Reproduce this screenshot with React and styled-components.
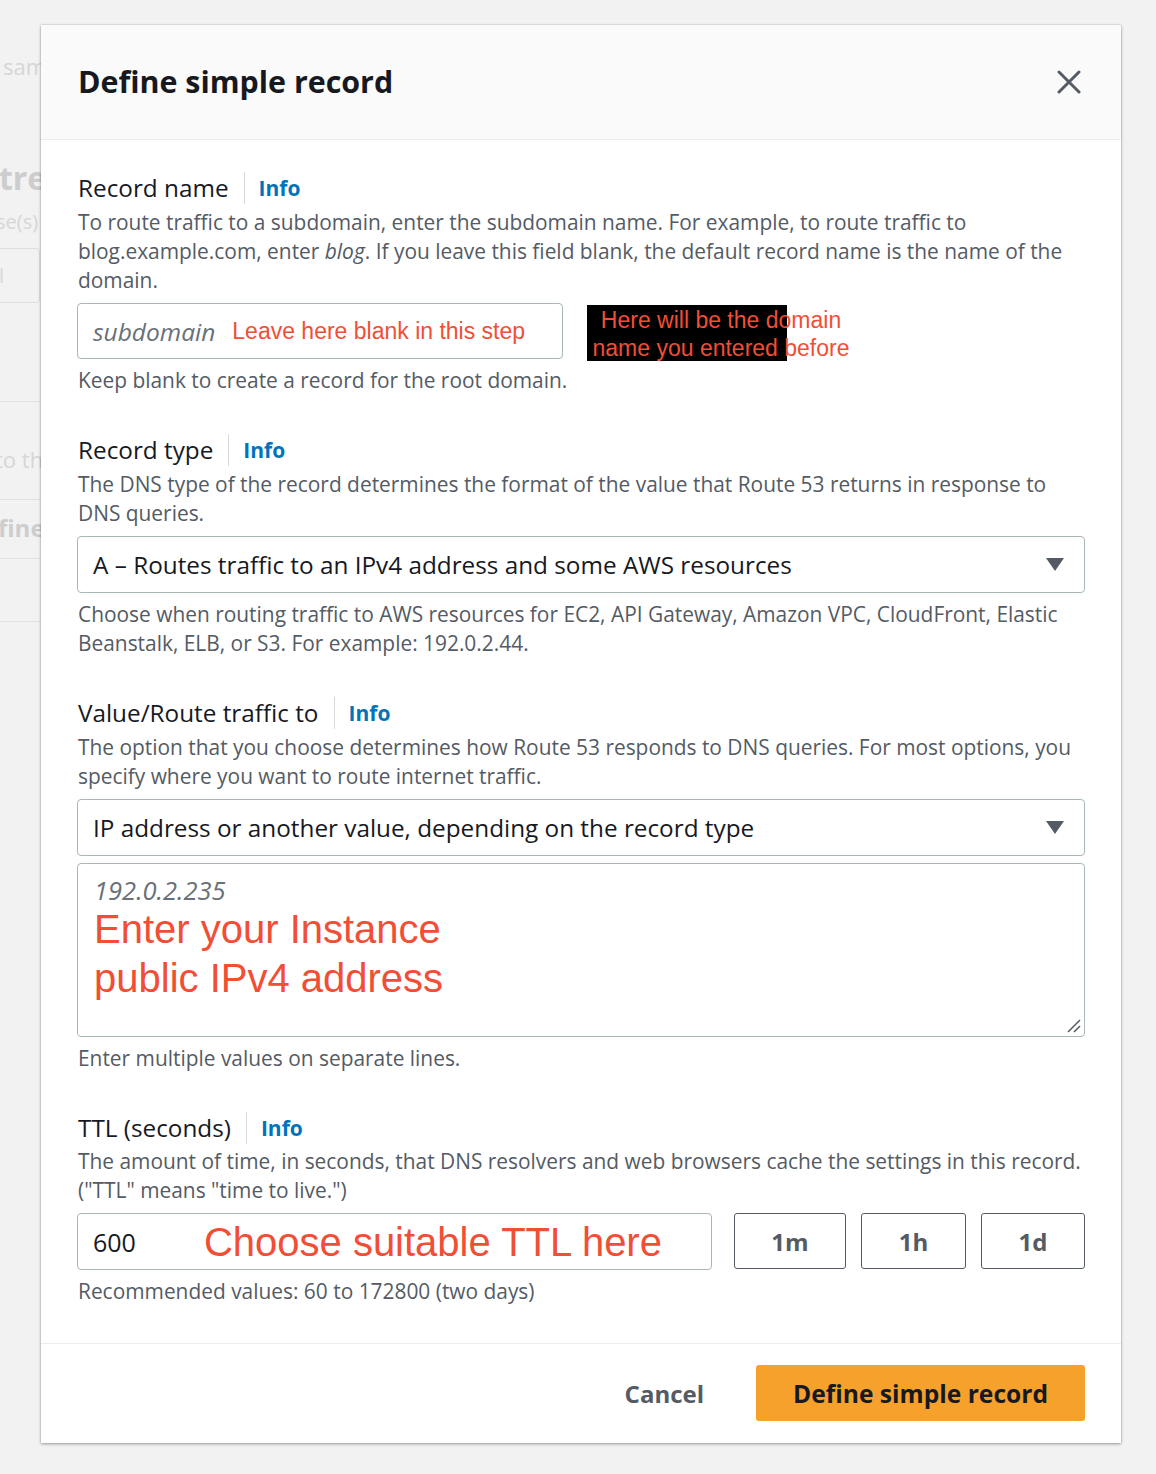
import React from 'react';
import styled, { createGlobalStyle } from 'styled-components';

const GlobalStyle = createGlobalStyle`
  html, body { margin: 0; padding: 0; background: #f2f2f2; }
  body { font-family: "Open Sans", "Noto Sans", sans-serif; color: #16191f; }
  * { box-sizing: border-box; }
`;

const RED = '#f24e36';

const Page = styled.div`
  position: relative;
  width: 1156px;
  height: 1474px;
  overflow: hidden;
  background: #f2f2f2;
`;

const Backdrop = styled.div`
  display: flex;
  flex-direction: column;
  width: 140px;
  padding-top: 52px;
`;

const BgText = styled.div`
  font-size: ${(p) => p.$size || 22}px;
  line-height: ${(p) => p.$lh || 28}px;
  font-weight: ${(p) => (p.$bold ? 700 : 400)};
  color: ${(p) => (p.$bold ? '#cdcdcd' : '#d6d6d6')};
  margin-top: ${(p) => p.$mt || 0}px;
  margin-left: ${(p) => p.$ml || 0}px;
  white-space: nowrap;
`;

const BgBox = styled.div`
  margin-top: ${(p) => p.$mt}px;
  margin-left: -4px;
  width: 44px;
  height: 55px;
  border: 1px solid #dedede;
  border-radius: 4px;
  font-size: 20px;
  line-height: 53px;
  color: #d8d8d8;
  padding-left: 2px;
`;

const BgLine = styled.div`
  margin-top: ${(p) => p.$mt}px;
  height: 1px;
  background: #e2e2e2;
`;

const Modal = styled.div`
  position: absolute;
  left: 41px;
  top: 25px;
  width: 1080px;
  background: #ffffff;
  box-shadow: 0 1px 3px rgba(0, 0, 0, 0.35), 0 0 1px rgba(0, 0, 0, 0.25);
`;

const Header = styled.div`
  height: 115px;
  padding: 0 40px 0 37px;
  background: #fafafa;
  border-bottom: 1px solid #eaeded;
  display: flex;
  align-items: center;
  justify-content: space-between;
`;

const Title = styled.h2`
  margin: 0;
  font-size: 30.4px;
  line-height: 40px;
  font-weight: 700;
  color: #16191f;
`;

const CloseButton = styled.button`
  border: 0;
  background: none;
  padding: 0;
  width: 24px;
  height: 24px;
  display: flex;
  cursor: pointer;
`;

const Body = styled.div`
  padding: 33px 36px 37px;
  display: flex;
  flex-direction: column;
`;

const Field = styled.div`
  display: flex;
  flex-direction: column;
  & + & {
    margin-top: 40px;
  }
`;

const LabelRow = styled.div`
  display: flex;
  align-items: center;
  height: 30px;
`;

const Label = styled.span`
  font-size: 24.3px;
  line-height: 30px;
  color: #16191f;
  padding-left: 1px;
`;

const InfoLink = styled.a`
  margin-left: 15px;
  padding-left: 14px;
  border-left: 1px solid #d5dbdb;
  font-size: 21px;
  line-height: 32px;
  font-weight: 700;
  color: #0073bb;
  text-decoration: none;
`;

const Description = styled.div`
  margin-top: ${(p) => p.$mt || 5}px;
  font-size: 20.9px;
  line-height: 29px;
  color: #545b64;
  padding-left: 1px;
`;

const ControlRow = styled.div`
  margin-top: 8px;
  display: flex;
  align-items: flex-start;
`;

const TextBox = styled.div`
  height: ${(p) => p.$h || 56}px;
  width: ${(p) => (p.$w ? `${p.$w}px` : 'auto')};
  flex: ${(p) => (p.$w ? '0 0 auto' : '1 1 auto')};
  border: 1px solid #aab7b8;
  border-radius: 4px;
  padding: 0 15px;
  display: flex;
  align-items: center;
  background: #fff;
`;

const Placeholder = styled.span`
  font-size: 24.5px;
  font-style: italic;
  color: #687078;
`;

const Value = styled.span`
  font-size: 25px;
  color: #16191f;
`;

const Annotation = styled.span`
  font-family: "Liberation Sans", Arial, sans-serif;
  font-size: ${(p) => p.$size || 23}px;
  line-height: ${(p) => p.$lh || 28}px;
  color: ${RED};
  margin-left: ${(p) => p.$ml || 0}px;
  white-space: nowrap;
`;

const Callout = styled.div`
  position: relative;
  margin-left: 24px;
  margin-top: 2px;
  width: 268px;
  height: 54px;
  padding-top: 1px;
  text-align: center;
  font-family: "Liberation Sans", Arial, sans-serif;
  font-size: 23px;
  line-height: 28px;
  color: ${RED};
`;

const CalloutMask = styled.div`
  position: absolute;
  left: 0;
  top: 0;
  width: 200px;
  height: 56px;
  background: #000;
`;

const CalloutText = styled.div`
  position: relative;
  white-space: nowrap;
`;

const Select = styled.div`
  margin-top: 8px;
  height: 57px;
  border: 1px solid #aab7b8;
  border-radius: 4px;
  padding: 0 20px 0 15px;
  display: flex;
  align-items: center;
  justify-content: space-between;
  font-size: 24.3px;
  color: #16191f;
`;

const TextArea = styled.div`
  position: relative;
  margin-top: 7px;
  height: 174px;
  border: 1px solid #aab7b8;
  border-radius: 4px;
  padding: 12px 16px 0;
  display: flex;
  flex-direction: column;
`;

const AreaPlaceholder = styled.div`
  font-size: 25.5px;
  line-height: 29px;
  font-style: italic;
  color: #687078;
`;

const AreaAnnotation = styled.div`
  font-family: "Liberation Sans", Arial, sans-serif;
  font-size: 40px;
  line-height: 49px;
  color: ${RED};
`;

const ResizeHandle = styled.svg`
  position: absolute;
  right: 2px;
  bottom: 2px;
`;

const ButtonGroup = styled.div`
  margin-left: 22px;
  display: flex;
  gap: 15px;
`;

const PresetButton = styled.button`
  width: ${(p) => p.$w}px;
  height: 56px;
  border: 1px solid #545b64;
  border-radius: 3px;
  background: #fff;
  font-family: inherit;
  font-size: 24px;
  font-weight: 700;
  color: #545b64;
  padding: 0;
`;

const Footer = styled.div`
  border-top: 1px solid #eaeded;
  padding: 21px 36px 22px;
  display: flex;
  justify-content: flex-end;
  align-items: center;
  gap: 32px;
`;

const LinkButton = styled.button`
  border: 0;
  background: none;
  padding: 0 20px;
  font-family: inherit;
  font-size: 24px;
  font-weight: 700;
  color: #545b64;
  height: 56px;
`;

const PrimaryButton = styled.button`
  width: 329px;
  height: 56px;
  border: 0;
  border-radius: 3px;
  background: #f5a12c;
  font-family: inherit;
  font-size: 24.6px;
  font-weight: 700;
  color: #16191f;
  padding: 0;
`;

const Caret = () => (
  <svg width="18" height="13" viewBox="0 0 18 13">
    <path d="M0 0 H18 L9 13 Z" fill="#545b64" />
  </svg>
);

const FieldLabel = ({ children }) => (
  <LabelRow>
    <Label>{children}</Label>
    <InfoLink href="#">Info</InfoLink>
  </LabelRow>
);

export default function App() {
  return (
    <Page>
      <GlobalStyle />
      <Backdrop>
        <BgText $ml={3}>sample</BgText>
        <BgText $bold $size={32} $lh={40} $mt={78} $ml={-17}>streaming</BgText>
        <BgText $size={20} $lh={26} $mt={11} $ml={-4}>se(s)</BgText>
        <BgBox $mt={13}>l</BgBox>
        <BgLine $mt={98} />
        <BgText $mt={43} $ml={-5}>to the</BgText>
        <BgLine $mt={26} />
        <BgText $bold $size={24} $lh={30} $mt={13} $ml={-2}>fine</BgText>
        <BgLine $mt={15} />
        <BgLine $mt={62} />
      </Backdrop>

      <Modal>
        <Header>
          <Title>Define simple record</Title>
          <CloseButton aria-label="Close">
            <svg width="24" height="24" viewBox="0 0 24 24">
              <path d="M2 2 L22 22 M22 2 L2 22" stroke="#545b64" strokeWidth="3" strokeLinecap="round" />
            </svg>
          </CloseButton>
        </Header>

        <Body>
          <Field>
            <FieldLabel>Record name</FieldLabel>
            <Description>
              To route traffic to a subdomain, enter the subdomain name. For example, to route traffic to
              blog.example.com, enter <i>blog</i>. If you leave this field blank, the default record name is the name of the
              domain.
            </Description>
            <ControlRow>
              <TextBox $w={486}>
                <Placeholder>subdomain</Placeholder>
                <Annotation $ml={17}>Leave here blank in this step</Annotation>
              </TextBox>
              <Callout>
                <CalloutMask />
                <CalloutText>
                  Here will be the domain
                  <br />
                  name you entered before
                </CalloutText>
              </Callout>
            </ControlRow>
            <Description $mt={7}>Keep blank to create a record for the root domain.</Description>
          </Field>

          <Field>
            <FieldLabel>Record type</FieldLabel>
            <Description>
              The DNS type of the record determines the format of the value that Route 53 returns in response to
              DNS queries.
            </Description>
            <Select>
              <span>A – Routes traffic to an IPv4 address and some AWS resources</span>
              <Caret />
            </Select>
            <Description $mt={7}>
              Choose when routing traffic to AWS resources for EC2, API Gateway, Amazon VPC, CloudFront, Elastic
              Beanstalk, ELB, or S3. For example: 192.0.2.44.
            </Description>
          </Field>

          <Field>
            <FieldLabel>Value/Route traffic to</FieldLabel>
            <Description>
              The option that you choose determines how Route 53 responds to DNS queries. For most options, you
              specify where you want to route internet traffic.
            </Description>
            <Select>
              <span>IP address or another value, depending on the record type</span>
              <Caret />
            </Select>
            <TextArea>
              <AreaPlaceholder>192.0.2.235</AreaPlaceholder>
              <AreaAnnotation>
                Enter your Instance
                <br />
                public IPv4 address
              </AreaAnnotation>
              <ResizeHandle width="16" height="16" viewBox="0 0 16 16">
                <path d="M2 14 L14 2 M8 14 L14 8" stroke="#545b64" strokeWidth="1.5" />
              </ResizeHandle>
            </TextArea>
            <Description $mt={7}>Enter multiple values on separate lines.</Description>
          </Field>

          <Field>
            <FieldLabel>TTL (seconds)</FieldLabel>
            <Description $mt={4}>
              The amount of time, in seconds, that DNS resolvers and web browsers cache the settings in this record.
              ("TTL" means "time to live.")
            </Description>
            <ControlRow>
              <TextBox $h={57}>
                <Value>600</Value>
                <Annotation $size={40} $lh={48} $ml={68}>Choose suitable TTL here</Annotation>
              </TextBox>
              <ButtonGroup>
                <PresetButton $w={112}>1m</PresetButton>
                <PresetButton $w={105}>1h</PresetButton>
                <PresetButton $w={104}>1d</PresetButton>
              </ButtonGroup>
            </ControlRow>
            <Description $mt={7}>Recommended values: 60 to 172800 (two days)</Description>
          </Field>
        </Body>

        <Footer>
          <LinkButton>Cancel</LinkButton>
          <PrimaryButton>Define simple record</PrimaryButton>
        </Footer>
      </Modal>
    </Page>
  );
}
